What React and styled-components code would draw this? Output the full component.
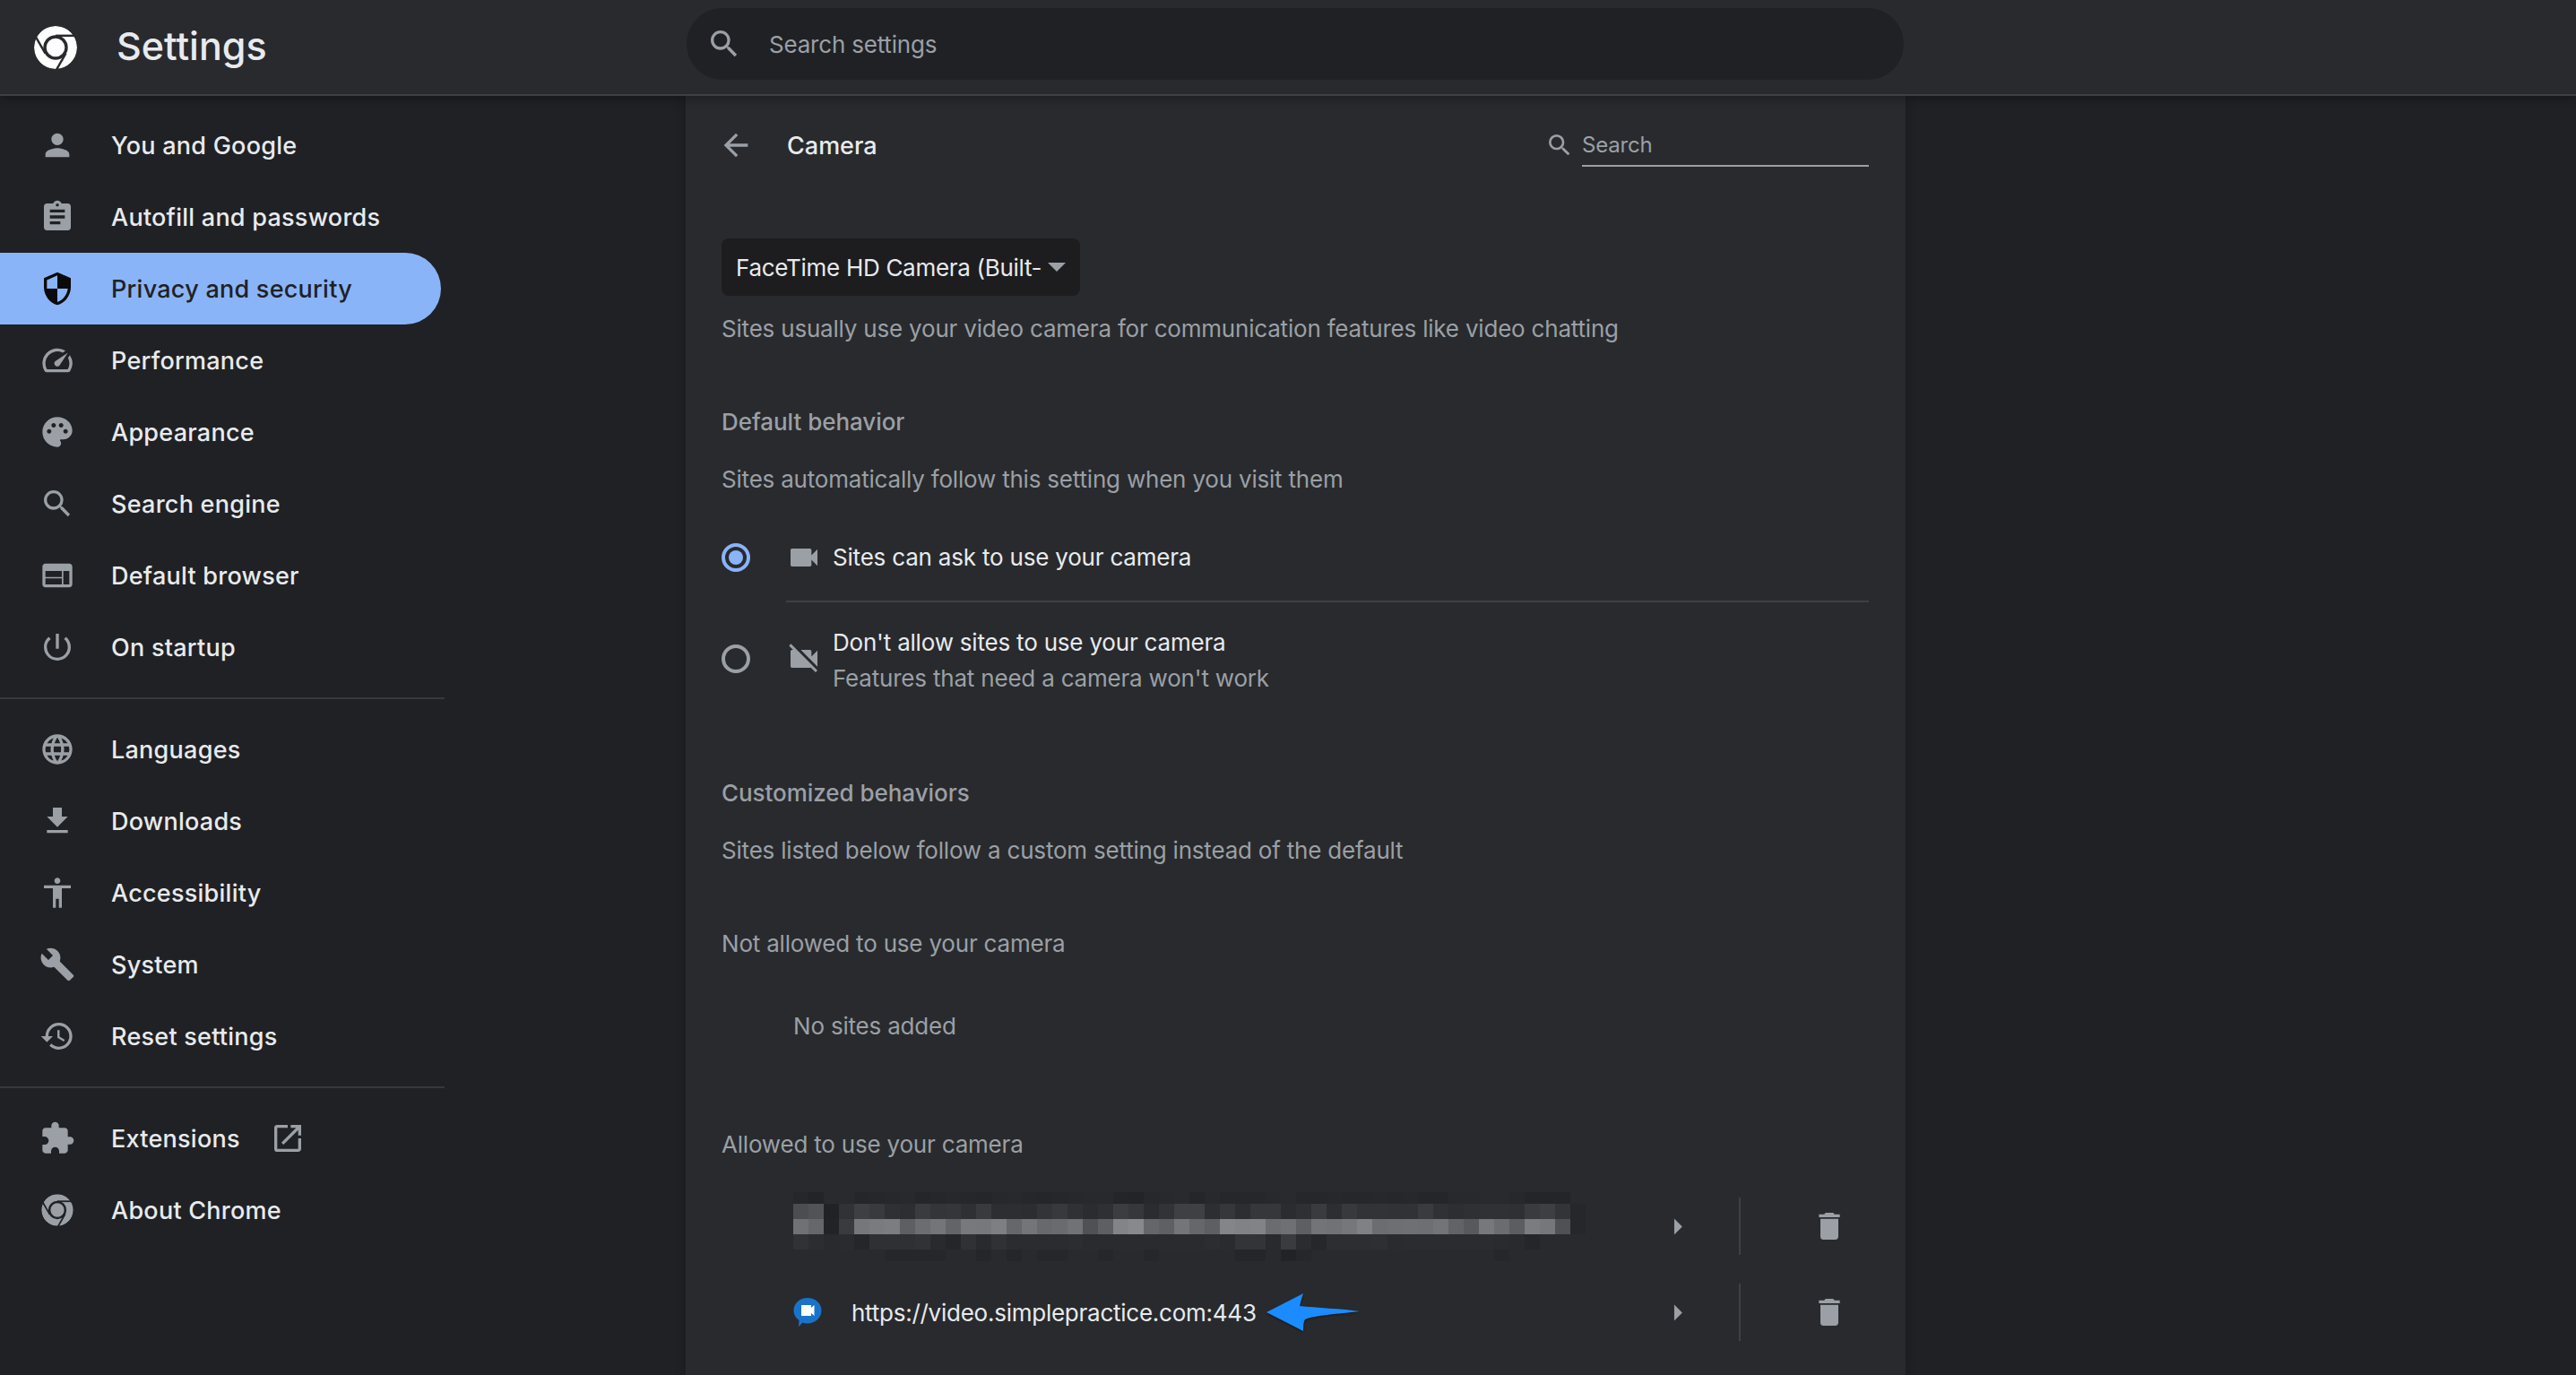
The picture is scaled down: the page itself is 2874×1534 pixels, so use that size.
import React from 'react';
import styled, { createGlobalStyle } from 'styled-components';
import {
  MdPerson, MdAssignment, MdSecurity, MdSpeed, MdPalette, MdSearch, MdWeb,
  MdPowerSettingsNew, MdLanguage, MdFileDownload, MdAccessibility, MdBuild,
  MdRestore, MdExtension, MdOpenInNew, MdArrowBack, MdVideocam, MdVideocamOff,
  MdDelete, MdArrowRight,
} from 'react-icons/md';

const GlobalStyle = createGlobalStyle`
  html, body {
    margin: 0;
    padding: 0;
    background: #202124;
  }
  * {
    box-sizing: border-box;
  }
`;

const Page = styled.div`
  width: 2874px;
  height: 1534px;
  overflow: hidden;
  background: #202124;
  color: #e8eaed;
  font-family: Inter, "Liberation Sans", sans-serif;
  font-size: 26px;
  letter-spacing: -0.2px;
  display: flex;
  flex-direction: column;
`;

const Header = styled.header`
  height: 107px;
  flex: none;
  display: flex;
  align-items: center;
  background: #292a2d;
  border-bottom: 2px solid #3f4043;
  box-shadow: 0 4px 10px rgba(0, 0, 0, 0.28);
  position: relative;
  z-index: 2;
`;

const Brand = styled.div`
  width: 766px;
  flex: none;
  display: flex;
  align-items: center;
  padding-left: 38px;
  color: #fff;
`;

const Title = styled.h1`
  margin: -3px 0 0 44px;
  font-size: 43px;
  font-weight: 500;
  line-height: 60px;
  letter-spacing: 0;
  color: #e8eaed;
`;

const SearchBar = styled.div`
  width: 1358px;
  height: 80px;
  margin-top: -8px;
  border-radius: 40px;
  background: #202124;
  display: flex;
  align-items: center;
  gap: 30px;
  padding-left: 22px;
  color: #9aa0a6;
  svg {
    flex: none;
  }
`;

const SearchHint = styled.span`
  margin-top: 2px;
`;

const Body = styled.div`
  flex: 1;
  display: flex;
  min-height: 0;
`;

const Sidebar = styled.nav`
  width: 496px;
  flex: none;
  padding-top: 15px;
`;

const NavItem = styled.div`
  width: 492px;
  height: 80px;
  display: flex;
  align-items: center;
  padding-left: 44px;
  font-size: 27px;
  font-weight: 500;
  letter-spacing: 0.25px;
  border-radius: 0 40px 40px 0;
  background: ${(p) => (p.$active ? '#8ab4f8' : 'transparent')};
  color: ${(p) => (p.$active ? '#202124' : '#e8eaed')};
  > svg:first-child {
    flex: none;
    margin-right: 40px;
    color: ${(p) => (p.$active ? '#0a0a0c' : '#9aa0a6')};
  }
`;

const NavDivider = styled.div`
  height: 2px;
  background: #37383b;
  margin: 16px 0;
`;

const OpenIcon = styled(MdOpenInNew)`
  margin-left: 33px;
  color: #9aa0a6;
`;

const Card = styled.main`
  width: 1361px;
  margin-left: 269px;
  padding: 15px 41px 0 40px;
  background: #292a2d;
  box-shadow: 0 0 12px rgba(0, 0, 0, 0.22);
`;

const SubHeader = styled.div`
  height: 80px;
  display: flex;
  align-items: center;
`;

const BackIcon = styled(MdArrowBack)`
  flex: none;
  margin-left: -4px;
  color: #9aa0a6;
`;

const SubTitle = styled.h2`
  margin: 0 0 0 37px;
  flex: 1;
  font-size: 27px;
  font-weight: 500;
  letter-spacing: 0;
  color: #e8eaed;
`;

const SubSearch = styled.div`
  width: 361px;
  display: flex;
  align-items: center;
  gap: 9px;
  color: #9aa0a6;
  svg {
    flex: none;
  }
`;

const SubSearchField = styled.div`
  flex: 1;
  height: 48px;
  line-height: 48px;
  font-size: 24px;
  border-bottom: 2px solid #9aa0a6;
`;

const Select = styled.div`
  width: 400px;
  height: 64px;
  margin-top: 64px;
  padding: 0 16px;
  display: flex;
  align-items: center;
  gap: 4px;
  background: #1d1d1f;
  border-radius: 8px;
  color: #e8eaed;
`;

const SelectText = styled.span`
  flex: 1;
  min-width: 0;
  letter-spacing: -0.3px;
  white-space: nowrap;
`;

const Caret = styled.i`
  flex: none;
  width: 0;
  height: 0;
  border-left: 10px solid transparent;
  border-right: 10px solid transparent;
  border-top: 10px solid #9aa0a6;
`;

const Note = styled.div`
  line-height: 40px;
  margin-top: ${(p) => p.$top}px;
  color: #9aa0a6;
`;

const SectionTitle = styled.div`
  line-height: 40px;
  margin-top: ${(p) => p.$top}px;
  font-weight: 500;
  letter-spacing: -0.05px;
  color: #9aa0a6;
`;

const EmptyNote = styled(Note)`
  padding-left: 80px;
`;

const RadioRow = styled.div`
  height: ${(p) => p.$height}px;
  display: flex;
  align-items: center;
  margin-top: ${(p) => p.$top || 0}px;
`;

const Radio = styled.span`
  flex: none;
  width: 32px;
  height: 32px;
  border-radius: 50%;
  border: 4px solid ${(p) => (p.$on ? '#8ab4f8' : '#9aa0a6')};
  display: grid;
  place-items: center;
  margin-right: 40px;
  &::after {
    content: '';
    width: 16px;
    height: 16px;
    border-radius: 50%;
    background: ${(p) => (p.$on ? '#8ab4f8' : 'transparent')};
  }
`;

const OptionIcon = styled.span`
  flex: none;
  display: flex;
  color: #9aa0a6;
  margin-right: 12px;
`;

const OptionText = styled.div`
  line-height: 40px;
  padding-top: ${(p) => p.$shift || 0}px;
  color: #e8eaed;
`;

const OptionSub = styled.div`
  color: #9aa0a6;
`;

const RuleLine = styled.div`
  height: 2px;
  margin-left: 72px;
  background: #3f4043;
`;

const SiteList = styled.div`
  margin-top: 23px;
  padding-left: 80px;
`;

const SiteRow = styled.div`
  height: 96px;
  display: flex;
  align-items: center;
`;

const SiteMain = styled.div`
  width: 1055px;
  flex: none;
  display: flex;
  align-items: center;
`;

const SiteUrl = styled.span`
  margin-left: 33px;
  letter-spacing: -0.25px;
  color: #e8eaed;
`;

const SiteLeft = styled.div`
  flex: 1;
  min-width: 0;
  display: flex;
  align-items: center;
`;

const ExpandIcon = styled(MdArrowRight)`
  flex: none;
  margin-right: 47px;
  color: #9aa0a6;
`;

const RowDivider = styled.div`
  width: 2px;
  height: 64px;
  flex: none;
  background: #3f4043;
`;

const TrashIcon = styled(MdDelete)`
  flex: none;
  margin-left: 79px;
  color: #9aa0a6;
`;

const Pointer = styled.svg`
  flex: none;
  margin-left: 11px;
  filter: drop-shadow(0 1px 1px rgba(0, 0, 0, 0.5));
`;

// Chrome mark: disc with the ring and the three gaps cut out of it
const ChromeLogo = ({ id, size, view = '0 0 48 48' }) => (
  <svg width={size} height={size} viewBox={view} fill="currentColor">
    <mask id={id} maskUnits="userSpaceOnUse" x="-4" y="-4" width="56" height="56">
      <circle cx="24" cy="24" r="24" fill="#fff" />
      <g stroke="#000" strokeWidth="2.4" fill="none">
        <circle cx="24" cy="24" r="12" strokeWidth="3.4" />
        <path d="M24 10.800 H48" />
        <path d="M24 10.800 H48" transform="rotate(120 24 24)" />
        <path d="M24 10.800 H48" transform="rotate(240 24 24)" />
      </g>
    </mask>
    <circle cx="24" cy="24" r="24" mask={`url(#${id})`} />
  </svg>
);

const SiteBubble = () => (
  <svg width="32" height="32" viewBox="0 0 32 32">
    <path d="M16 0c8.500 0 15.500 6 15.500 14s-7 14.500-15.500 14.500c-2 0-4-.4-5.500-1l-4.500 4.500.5-7C2.500 22.500.5 18.500.5 14 .5 6 7.500 0 16 0z" fill="#1a73c9" />
    <path d="M9 8h11v3l3.500-3v12L20 17v3H9z" fill="#fff" />
  </svg>
);

// pixelated site name, one row of grey levels per mosaic row
const MOSAIC_ROWS = [
  { h: 13, cells: [38, 35, 41, 41, 37, 38, 39, 40, 37, 38, 39, 38, 37, 39, 40, 38, 37, 38, 39, 40, 40, 36, 35, 39, 40, 41, 37, 40, 38, 38, 38, 40, 41, 38, 38, 39, 38, 38, 39, 38, 39, 37, 37, 40, 40, 41, 41, 39, 36, 36, 36, 41] },
  { h: 17, cells: [76, 82, 33, 49, 62, 57, 47, 45, 58, 52, 53, 47, 57, 45, 45, 44, 51, 56, 48, 43, 47, 60, 54, 43, 50, 63, 63, 45, 54, 45, 54, 54, 43, 47, 58, 45, 56, 50, 50, 49, 49, 58, 48, 45, 47, 48, 48, 47, 58, 62, 51, 38] },
  { h: 17, cells: [112, 102, 34, 58, 118, 122, 124, 94, 108, 116, 99, 120, 119, 126, 102, 116, 104, 106, 113, 80, 94, 131, 136, 101, 95, 116, 102, 94, 132, 129, 130, 107, 111, 94, 115, 113, 118, 128, 108, 110, 111, 110, 115, 98, 88, 119, 107, 92, 123, 118, 80, 38] },
  { h: 17, cells: [49, 44, 41, 42, 37, 47, 47, 47, 49, 41, 37, 48, 41, 48, 43, 43, 43, 43, 44, 42, 42, 42, 42, 42, 42, 42, 42, 44, 42, 51, 51, 41, 58, 43, 38, 45, 45, 45, 46, 42, 43, 43, 43, 43, 43, 43, 42, 41, 37, 41, 41, 41] },
  { h: 13, cells: [41, 41, 41, 41, 41, 41, 38, 38, 38, 38, 41, 41, 37, 41, 37, 41, 38, 38, 41, 41, 38, 41, 41, 38, 41, 41, 41, 41, 41, 37, 37, 41, 34, 38, 41, 41, 41, 41, 41, 41, 41, 41, 41, 41, 41, 41, 38, 41, 41, 41, 41, 41] },
];

const Mosaic = () => {
  let y = 0;
  return (
    <svg width="884" height="77" viewBox="0 0 884 77" shapeRendering="crispEdges">
      {MOSAIC_ROWS.map((row) => {
        const top = y;
        y += row.h;
        return row.cells.map((v, i) => (
          <rect key={`${top}-${i}`} x={i * 17} y={top} width="17" height={row.h} fill={`rgb(${v},${v + 1},${v + 5})`} />
        ));
      })}
    </svg>
  );
};

const NAV_TOP = [
  { icon: MdPerson, label: 'You and Google' },
  { icon: MdAssignment, label: 'Autofill and passwords' },
  { icon: MdSecurity, label: 'Privacy and security', active: true },
  { icon: MdSpeed, label: 'Performance' },
  { icon: MdPalette, label: 'Appearance' },
  { icon: MdSearch, label: 'Search engine' },
  { icon: MdWeb, label: 'Default browser' },
  { icon: MdPowerSettingsNew, label: 'On startup' },
];

const NAV_MIDDLE = [
  { icon: MdLanguage, label: 'Languages' },
  { icon: MdFileDownload, label: 'Downloads' },
  { icon: MdAccessibility, label: 'Accessibility' },
  { icon: MdBuild, label: 'System' },
  { icon: MdRestore, label: 'Reset settings' },
];

const renderNav = (items) =>
  items.map(({ icon: Icon, label, active }) => (
    <NavItem key={label} $active={active}>
      <Icon size={40} />
      {label}
    </NavItem>
  ));

export default function App() {
  return (
    <Page>
      <GlobalStyle />
      <Header>
        <Brand>
          <ChromeLogo id="logo-main" size={48} />
          <Title>Settings</Title>
        </Brand>
        <SearchBar>
          <MdSearch size={40} />
          <SearchHint>Search settings</SearchHint>
        </SearchBar>
      </Header>
      <Body>
        <Sidebar>
          {renderNav(NAV_TOP)}
          <NavDivider />
          {renderNav(NAV_MIDDLE)}
          <NavDivider />
          <NavItem>
            <MdExtension size={40} />
            Extensions
            <OpenIcon size={40} />
          </NavItem>
          <NavItem>
            <ChromeLogo id="logo-about" size={40} view="-3 -3 54 54" />
            About Chrome
          </NavItem>
        </Sidebar>
        <Card>
          <SubHeader>
            <BackIcon size={40} />
            <SubTitle>Camera</SubTitle>
            <SubSearch>
              <MdSearch size={32} />
              <SubSearchField>Search</SubSearchField>
            </SubSearch>
          </SubHeader>
          <Select>
            <SelectText>FaceTime HD Camera (Built-</SelectText>
            <Caret />
          </Select>
          <Note $top={17}>Sites usually use your video camera for communication features like video chatting</Note>
          <SectionTitle $top={64}>Default behavior</SectionTitle>
          <Note $top={24}>Sites automatically follow this setting when you visit them</Note>
          <RadioRow $height={96} $top={19}>
            <Radio $on />
            <OptionIcon><MdVideocam size={40} /></OptionIcon>
            <OptionText>Sites can ask to use your camera</OptionText>
          </RadioRow>
          <RuleLine />
          <RadioRow $height={126}>
            <Radio />
            <OptionIcon><MdVideocamOff size={40} /></OptionIcon>
            <OptionText $shift={4}>
              Don't allow sites to use your camera
              <OptionSub>Features that need a camera won't work</OptionSub>
            </OptionText>
          </RadioRow>
          <SectionTitle $top={67}>Customized behaviors</SectionTitle>
          <Note $top={24}>Sites listed below follow a custom setting instead of the default</Note>
          <Note $top={64}>Not allowed to use your camera</Note>
          <EmptyNote $top={52}>No sites added</EmptyNote>
          <Note $top={92}>Allowed to use your camera</Note>
          <SiteList>
            <SiteRow>
              <SiteMain>
                <SiteLeft><Mosaic /></SiteLeft>
                <ExpandIcon size={43} />
              </SiteMain>
              <RowDivider />
              <TrashIcon size={40} />
            </SiteRow>
            <SiteRow>
              <SiteMain>
                <SiteLeft>
                  <SiteBubble />
                  <SiteUrl>https://video.simplepractice.com:443</SiteUrl>
                  <Pointer width="104" height="42" viewBox="0 0 104 42">
                    <path d="M0 21L41 0C39 6 38 10 37 14C55 16 85 17 104 20C80 23 55 24 43 29C41 32 41 37 41 42Z" fill="#1b8cff" />
                  </Pointer>
                </SiteLeft>
                <ExpandIcon size={43} />
              </SiteMain>
              <RowDivider />
              <TrashIcon size={40} />
            </SiteRow>
          </SiteList>
        </Card>
      </Body>
    </Page>
  );
}
